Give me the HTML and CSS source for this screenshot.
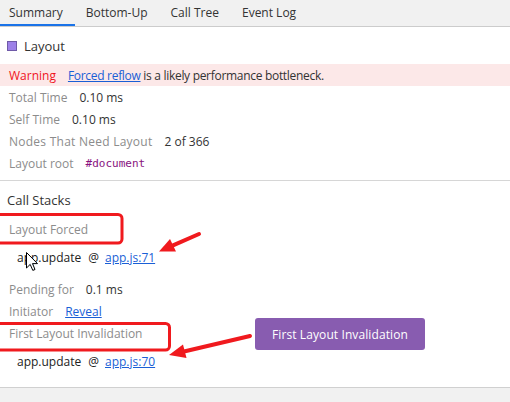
FILE: index.html
```html
<!DOCTYPE html>
<html>
<head>
<meta charset="utf-8">
<link rel="stylesheet" href="styles.css">
</head>
<body>
<div class="tabs">
  <div class="tab active">Summary</div>
  <div class="tab">Bottom-Up</div>
  <div class="tab">Call Tree</div>
  <div class="tab">Event Log</div>
</div>
<div class="summary">
  <div class="title"><span class="swatch"></span>Layout</div>
  <div class="row warning"><span class="warn-label">Warning</span><span class="warn-text"><a class="link">Forced reflow</a> is a likely performance bottleneck.</span></div>
  <div class="row"><span class="label">Total Time</span><span class="value">0.10 ms</span></div>
  <div class="row"><span class="label">Self Time</span><span class="value">0.10 ms</span></div>
  <div class="row"><span class="label wide">Nodes That Need Layout</span><span class="value">2 of 366</span></div>
  <div class="row"><span class="label">Layout root</span><span class="node">#document</span></div>
</div>
<div class="stacks">
  <div class="stacks-title">Call Stacks</div>
  <div class="row"><span class="label">Layout Forced</span></div>
  <div class="frame">app.update<span class="at">@</span><a class="link">app.js:71</a></div>
  <div class="row"><span class="label">Pending for</span><span class="value">0.1 ms</span></div>
  <div class="row"><span class="label">Initiator</span><a class="link">Reveal</a></div>
  <div class="row"><span class="label">First Layout Invalidation</span></div>
  <div class="frame">app.update<span class="at">@</span><a class="link">app.js:70</a></div>
</div>
<div class="footer"></div>

<svg class="annot" width="510" height="402" viewBox="0 0 510 402">
  <rect x="-10" y="214.5" width="132" height="28.5" rx="4" fill="none" stroke="#f01a1e" stroke-width="3"/>
  <rect x="-10" y="323.5" width="179.5" height="26.5" rx="4" fill="none" stroke="#f01a1e" stroke-width="3"/>
  <line x1="199" y1="234" x2="173" y2="245.4" stroke="#f01a1e" stroke-width="4" stroke-linecap="round"/>
  <polygon points="159,251.5 176,251.5 170,239" fill="#f01a1e"/>
  <line x1="250" y1="336" x2="184" y2="351.5" stroke="#f01a1e" stroke-width="4" stroke-linecap="round"/>
  <polygon points="169,355 186.5,358 183,344.5" fill="#f01a1e"/>
</svg>
<svg class="cursor" width="13" height="20" viewBox="0 0 13 20">
  <path d="M0.5 0.5 L0.5 16 L4.2 12.4 L6.8 18.4 L9 17.5 L6.5 11.6 L11.5 11.6 Z" fill="#fff" stroke="#000" stroke-width="1" stroke-linejoin="round"/>
</svg>
<div class="tooltip">First Layout Invalidation</div>
</body>
</html>
```
FILE: styles.css
```css
html, body {
  margin: 0;
  padding: 0;
  background: #fff;
  width: 510px;
  height: 402px;
  overflow: hidden;
}
body {
  font-family: "Open Sans", "Noto Sans", sans-serif;
  font-size: 12px;
  color: #333;
  position: relative;
  display: flex;
  flex-direction: column;
}
.tabs {
  display: flex;
  height: 26px;
  background: #f1f1f1;
  border-bottom: 1px solid #cccccc;
  flex: none;
}
.tab {
  padding: 0 12px 0 9px;
  line-height: 26px;
  color: #333;
  box-sizing: border-box;
  height: 26px;
  margin-right: 2px;
}
.tab.active {
  box-shadow: inset 0 -2px 0 #1a73e8;
  padding-right: 12px;
}
.summary {
  padding-bottom: 6px;
  border-bottom: 1px solid #d6d6d6;
}
.title {
  height: 37px;
  display: flex;
  align-items: center;
  padding-left: 7px;
  font-size: 13px;
  color: #333;
}
.swatch {
  width: 8px;
  height: 8px;
  background: #9d81e8;
  border: 1px solid #6f5aa8;
  margin-right: 7px;
}
.row {
  height: 22px;
  display: flex;
  align-items: center;
  padding-left: 9px;
  white-space: nowrap;
}
.label {
  color: #8c8c8c;
  margin-right: 12px;
}
.label.wide {
  letter-spacing: 0.25px;
}
.value {
  color: #333;
}
.warning {
  background: #fce8e8;
}
.warn-label {
  color: #f0141e;
  margin-right: 12px;
}
.warn-text {
  letter-spacing: -0.3px;
}
.link {
  color: #1a5fd6;
  text-decoration: underline;
  cursor: pointer;
}
.node {
  font-family: "DejaVu Sans Mono", "Liberation Mono", monospace;
  font-size: 11px;
  color: #881280;
}
.stacks {
  padding-bottom: 15px;
  border-bottom: 1px solid #d0d0d0;
}
.stacks-title {
  height: 37px;
  display: flex;
  align-items: center;
  padding-left: 7px;
  font-size: 13px;
  color: #333;
}
.frame {
  height: 22px;
  display: flex;
  align-items: center;
  padding-left: 17px;
  margin: 6px 0 10px;
  color: #222;
}
.stacks .frame:last-child {
  margin-bottom: 0;
}
.at {
  margin: 0 6px 0 7px;
}
.footer {
  flex: 1;
  background: #f1f1f1;
}
.annot {
  position: absolute;
  left: 0;
  top: 0;
  pointer-events: none;
}
.cursor {
  position: absolute;
  left: 26px;
  top: 252px;
}
.tooltip {
  position: absolute;
  left: 255px;
  top: 318px;
  width: 170px;
  height: 32px;
  background: #885cb0;
  border-radius: 3px;
  color: #fff;
  display: flex;
  align-items: center;
  justify-content: center;
  font-size: 12px;
  letter-spacing: 0.1px;
}
```
